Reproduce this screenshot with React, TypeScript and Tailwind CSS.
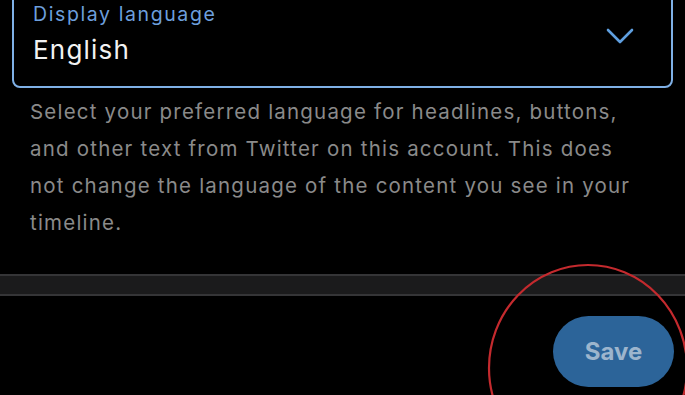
import React from 'react';

const ChevronDown = () => (
  <svg width="28" height="18" viewBox="0 0 28 18" fill="none">
    <path d="M2 3 L14 15 L26 3" stroke="#5f9fe0" strokeWidth="2.6" strokeLinecap="round" strokeLinejoin="round" />
  </svg>
);

export default function App() {
  return (
    <div
      className="relative w-[685px] h-[395px] overflow-hidden bg-black"
      style={{ fontFamily: 'Inter, Roboto, "Liberation Sans", sans-serif' }}
    >
      {/* language select */}
      <div className="mx-[12px] -mt-[8px] h-[96px] rounded-[8px] border-2 border-[#7fb0e6] flex items-start justify-between pl-[19px] pr-[37px] pt-[8px]">
        <div className="flex flex-col">
          <span className="text-[19.5px] leading-[24px] tracking-[1.6px] text-[#6d9fdc]">Display language</span>
          <span className="text-[26px] leading-[32px] tracking-[1.2px] text-[#f2f2f2] mt-[8px]">English</span>
        </div>
        <div className="mt-[25px]">
          <ChevronDown />
        </div>
      </div>

      <p className="pl-[30px] pr-[40px] pt-[5px] text-[20.5px] leading-[37px] tracking-[1.2px] text-[#8a8a8a]">
        Select your preferred language for headlines, buttons, and other text from Twitter on this account. This does not change the language of the content you see in your timeline.
      </p>

      {/* divider band */}
      <div className="mt-[33px] h-[22px] bg-[#1b1b1c] border-y-2 border-[#353537]" />

      {/* footer */}
      <div className="flex justify-end pr-[11px] pt-[20px]">
        <button className="w-[121px] h-[71px] rounded-full bg-[#2c6499] text-[#9db5cd] text-[24px] font-bold">
          Save
        </button>
      </div>

      {/* red annotation circle */}
      <svg className="absolute left-0 top-0 pointer-events-none" width="685" height="395">
        <ellipse cx="588" cy="368" rx="99" ry="103" fill="none" stroke="#c42a2e" strokeWidth="2.2" />
      </svg>
    </div>
  );
}
